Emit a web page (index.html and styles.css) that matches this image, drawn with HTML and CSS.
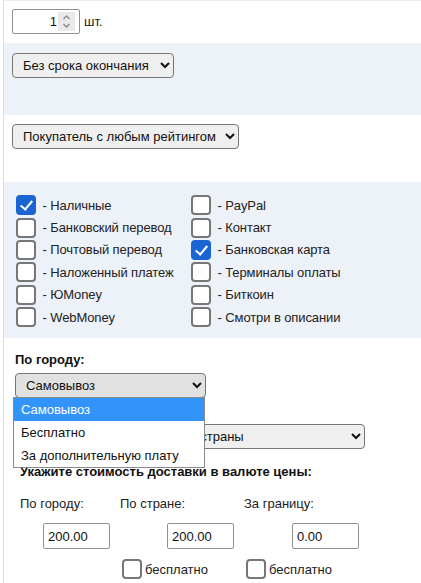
FILE: index.html
```html
<!DOCTYPE html>
<html lang="ru">
<head>
    <meta charset="UTF-8">
    <meta name="viewport" content="width=device-width, initial-scale=1.0">
    <title>Условия продажи</title>

    <link rel="stylesheet" href="styles.css">
</head>
<body>
    <div class="form">
        <div class="row row-qty">
            <div class="qty">
                <input type="text" value="1" class="qty-input">
                <span class="spin">
                    <svg width="17" height="19" viewBox="0 0 17 19">
                        <polyline points="5.5,7 8.5,4 11.5,7" fill="none" stroke="#8a8a8a" stroke-width="1.3"/>
                        <polyline points="5.5,12 8.5,15 11.5,12" fill="none" stroke="#8a8a8a" stroke-width="1.3"/>
                    </svg>
                </span>
            </div>
            <span class="unit">шт.</span>
        </div>

        <div class="row alt row-term">
            <select class="sel sel-term">
                <option>Без срока окончания</option>
                <option>7 дней</option>
                <option>14 дней</option>
            </select>
        </div>

        <div class="row row-buyer">
            <select class="sel sel-buyer">
                <option>Покупатель с любым рейтингом</option>
                <option>Только с положительным</option>
            </select>
        </div>

        <div class="row alt pay">
            <label class="pay-item"><input type="checkbox" checked> - Наличные</label>
            <label class="pay-item"><input type="checkbox"> - PayPal</label>
            <label class="pay-item"><input type="checkbox"> - Банковский перевод</label>
            <label class="pay-item"><input type="checkbox"> - Контакт</label>
            <label class="pay-item"><input type="checkbox"> - Почтовый перевод</label>
            <label class="pay-item"><input type="checkbox" checked> - Банковская карта</label>
            <label class="pay-item"><input type="checkbox"> - Наложенный платеж</label>
            <label class="pay-item"><input type="checkbox"> - Терминалы оплаты</label>
            <label class="pay-item"><input type="checkbox"> - ЮMoney</label>
            <label class="pay-item"><input type="checkbox"> - Биткоин</label>
            <label class="pay-item"><input type="checkbox"> - WebMoney</label>
            <label class="pay-item"><input type="checkbox"> - Смотри в описании</label>
        </div>

        <div class="row delivery">
            <div class="dl-title">По городу:</div>
            <div class="city">
                <select class="sel sel-city">
                    <option>Самовывоз</option>
                    <option>Бесплатно</option>
                    <option>За дополнительную плату</option>
                </select>
                <ul class="popup">
                    <li class="active">Самовывоз</li>
                    <li>Бесплатно</li>
                    <li>За дополнительную плату</li>
                </ul>
            </div>

            <select class="sel sel-country">
                <option>Доставка только в пределах страны</option>
            </select>

            <div class="dl-title dl-price">Укажите стоимость доставки в валюте цены:</div>

            <div class="price-labels">
                <span class="pl pl-1">По городу:</span>
                <span class="pl pl-2">По стране:</span>
                <span class="pl">За границу:</span>
            </div>

            <div class="price-inputs">
                <input type="text" class="price" value="200.00">
                <input type="text" class="price" value="200.00">
                <input type="text" class="price" value="0.00">
            </div>

            <div class="free">
                <label class="free-item"><input type="checkbox">бесплатно</label>
                <label class="free-item"><input type="checkbox">бесплатно</label>
            </div>
        </div>
    </div>
</body>
</html>
```

FILE: styles.css
```css
body {
    margin: 0;
    font-family: "Liberation Sans", Arial, sans-serif;
    font-size: 13px;
    line-height: 15px;
    color: #222;
    background: #fff;
}

.form {
    margin-left: 3px;
    border-left: 1px solid #dcdcdc;
    border-top: 1px solid #ececec;
}

.row {
    box-sizing: border-box;
}

.alt {
    background-color: #edf1f8;
}

/* количество */
.row-qty {
    height: 42px;
    padding: 8px 0 0 8px;
    display: flex;
    align-items: flex-start;
}

.qty {
    box-sizing: border-box;
    display: flex;
    align-items: center;
    width: 68px;
    height: 25px;
    border: 1px solid #8f8f8f;
    border-radius: 2px;
    background: #fff;
}

.qty-input {
    flex: 1;
    min-width: 0;
    border: none;
    outline: none;
    padding: 0 1px 0 0;
    font: inherit;
    text-align: right;
    color: #111;
    background: transparent;
}

.spin {
    display: flex;
    width: 17px;
    height: 19px;
    margin-right: 4px;
    background-color: #e9e9e9;
}

.unit {
    margin-left: 4px;
    line-height: 25px;
}

/* селекты */
.sel {
    box-sizing: border-box;
    height: 25px;
    padding: 0 4px 0 6px;
    font-family: "Liberation Sans", Arial, sans-serif;
    font-size: 13px;
    color: #111;
    background-color: #efefef;
    border: 1px solid #767676;
    border-radius: 4px;
}

.row-term {
    height: 72px;
    padding: 10px 0 0 8px;
}

.sel-term {
    width: 162px;
}

.row-buyer {
    height: 67px;
    padding: 9px 0 0 8px;
}

.sel-buyer {
    width: 227px;
}

/* способы оплаты */
.pay {
    height: 156px;
    padding: 12px 0 0 12px;
    display: grid;
    grid-template-columns: 175px auto;
    align-content: start;
}

.pay-item {
    display: flex;
    align-items: center;
    height: 22.4px;
    white-space: pre;
    letter-spacing: -0.1px;
}

input[type="checkbox"] {
    appearance: none;
    -webkit-appearance: none;
    box-sizing: border-box;
    position: relative;
    width: 20px;
    height: 20px;
    margin: 0 3px 0 0;
    border: 2px solid #777;
    border-radius: 4px;
    background: #fff;
    flex-shrink: 0;
}

input[type="checkbox"]:checked {
    background-color: #1b64d3;
    border-color: #1b64d3;
}

input[type="checkbox"]:checked::before {
    content: "";
    position: absolute;
    left: 5px;
    top: 1px;
    width: 5px;
    height: 10px;
    border: solid #fff;
    border-width: 0 2.5px 2.5px 0;
    transform: rotate(40deg);
}

/* доставка */
.delivery {
    padding: 14px 0 20px 11px;
}

.dl-title {
    font-weight: bold;
    color: #111;
}

.city {
    position: relative;
    margin-top: 6px;
    width: 191px;
}

.sel-city {
    width: 191px;
    background-color: #e1e1e1;
}

.popup {
    position: absolute;
    top: 24px;
    left: -2px;
    width: 192px;
    margin: 0;
    padding: 0;
    list-style: none;
    background: #fff;
    border: 1px solid #8a8a8a;
    box-sizing: border-box;
}

.popup li {
    height: 23px;
    line-height: 23px;
    padding-left: 7px;
    color: #111;
}

.popup li.active {
    background-color: #3293fb;
    color: #fff;
}

.sel-country {
    display: block;
    width: 350px;
    margin-top: 26px;
}

.dl-price {
    margin: 15px 0 0 5px;
}

.price-labels {
    display: flex;
    margin: 17px 0 0 5px;
}

.pl-1 {
    width: 100px;
}

.pl-2 {
    width: 124px;
}

.price-inputs {
    display: grid;
    grid-template-columns: 124px 125px 124px;
    margin: 12px 0 0 28px;
}

.price {
    box-sizing: border-box;
    width: 67px;
    height: 26px;
    padding: 0 4px;
    font: inherit;
    color: #111;
    border: 1px solid #8f8f8f;
    border-radius: 2px;
}

.free {
    display: flex;
    margin: 10px 0 0 107px;
}

.free-item {
    display: flex;
    align-items: center;
    width: 124px;
}
```
